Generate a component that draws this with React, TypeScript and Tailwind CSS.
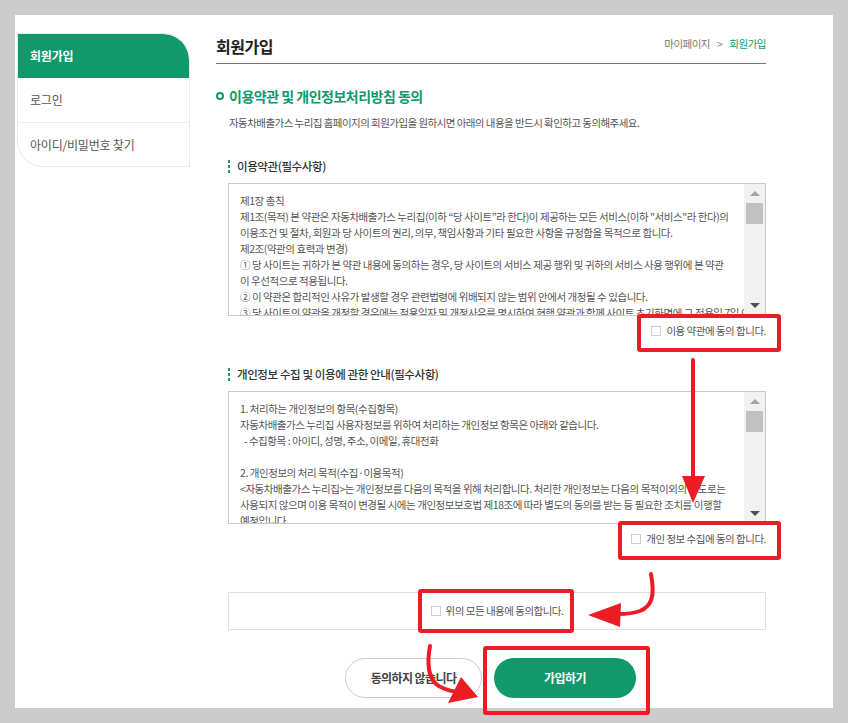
import React from "react";

const terms = [
  "제1장 총칙",
  "제1조(목적) 본 약관은 자동차배출가스 누리집(이하 “당 사이트”라 한다)이 제공하는 모든 서비스(이하 \"서비스\"라 한다)의",
  "이용조건 및 절차, 회원과 당 사이트의 권리, 의무, 책임사항과 기타 필요한 사항을 규정함을 목적으로 합니다.",
  "제2조(약관의 효력과 변경)",
  "① 당 사이트는 귀하가 본 약관 내용에 동의하는 경우, 당 사이트의 서비스 제공 행위 및 귀하의 서비스 사용 행위에 본 약관",
  "이 우선적으로 적용됩니다.",
  "② 이 약관은 합리적인 사유가 발생할 경우 관련법령에 위배되지 않는 범위 안에서 개정될 수 있습니다.",
  "③ 당 사이트의 약관을 개정할 경우에는 적용일자 및 개정사유를 명시하여 현행 약관과 함께 사이트 초기화면에 그 적용일 7일 이전부터",
];

const privacy = [
  "1. 처리하는 개인정보의 항목(수집항목)",
  "자동차배출가스 누리집 사용자정보를 위하여 처리하는 개인정보 항목은 아래와 같습니다.",
  "  - 수집항목 : 아이디, 성명, 주소, 이메일, 휴대전화",
  "",
  "2. 개인정보의 처리 목적(수집·이용목적)",
  "<자동차배출가스 누리집>는 개인정보를 다음의 목적을 위해 처리합니다. 처리한 개인정보는 다음의 목적이외의 용도로는",
  "사용되지 않으며 이용 목적이 변경될 시에는 개인정보보호법 제18조에 따라 별도의 동의를 받는 등 필요한 조치를 이행할",
  "예정입니다",
];

function Checkbox() {
  return <span className="inline-block w-[10px] h-[10px] border border-[#cfcfcf] bg-white" />;
}

function SubTitle({ children }: { children: React.ReactNode }) {
  return (
    <div className="mt-[27px] flex items-center gap-[7px] leading-[16px]">
      <div className="flex flex-col gap-[2px]">
        <span className="w-[2px] h-[3px] bg-[#11996c]" />
        <span className="w-[2px] h-[3px] bg-[#11996c]" />
        <span className="w-[2px] h-[3px] bg-[#11996c]" />
      </div>
      <span className="text-[11.5px] font-medium tracking-[-0.4px] text-[#333]">{children}</span>
    </div>
  );
}

function ScrollBox({ lines }: { lines: string[] }) {
  return (
    <div className="mt-[9px] h-[133px] border border-[#c8c8c8] flex">
      <div className="flex-1 overflow-hidden pl-[11px] pt-[9px] text-[10.5px] leading-[16px] tracking-[-0.45px] text-[#555]">
        {lines.map((l, i) => (
          <div key={i} className="whitespace-pre h-[16px]">
            {l}
          </div>
        ))}
      </div>
      <div className="w-[21px] bg-[#f1f1f1] flex flex-col items-center">
        <div className="h-[19px] flex items-center justify-center">
          <span className="w-0 h-0 border-l-[5px] border-r-[5px] border-b-[5px] border-l-transparent border-r-transparent border-b-[#a3a3a3]" />
        </div>
        <div className="w-[17px] h-[21px] bg-[#c1c1c1]" />
        <div className="flex-1" />
        <div className="h-[19px] flex items-center justify-center">
          <span className="w-0 h-0 border-l-[5px] border-r-[5px] border-t-[5px] border-l-transparent border-r-transparent border-t-[#505050]" />
        </div>
      </div>
    </div>
  );
}

function AgreeRow({ label }: { label: string }) {
  return (
    <div className="mt-[7px] flex justify-end items-center gap-[5px] leading-[16px] text-[10.5px] tracking-[-0.5px] text-[#555]">
      <Checkbox />
      <span>{label}</span>
    </div>
  );
}

function RedBox({ className }: { className: string }) {
  return <div className={`absolute border-[4px] border-[#ec1c24] rounded-[3px] ${className}`} />;
}

export default function App() {
  return (
    <div className="relative w-[848px] h-[723px] bg-[#cccccc] pt-[15px] pl-[15px] font-['Noto_Sans_CJK_KR','Noto_Sans',sans-serif] overflow-hidden">
      <div className="w-[818px] h-[693px] bg-white flex pl-[2px] pt-[18px]">
        {/* Sidebar */}
        <aside className="w-[173px] h-[134px] border border-[#e8e8e8] rounded-tr-[26px] rounded-bl-[26px] overflow-hidden text-[12px] tracking-[-0.2px]">
          <div className="h-[44px] bg-[#11996c] text-white font-bold flex items-center pl-[12px] rounded-tr-[26px]">회원가입</div>
          <div className="h-[45px] border-b border-[#ececec] text-[#555] flex items-center pl-[12px]">로그인</div>
          <div className="h-[44px] text-[#555] flex items-center pl-[12px]">아이디/비밀번호 찾기</div>
        </aside>

        {/* Main */}
        <main className="ml-[26px] w-[550px]">
          <div className="flex items-end justify-between border-b border-[#777] pb-[6px] leading-[22px]">
            <h1 className="text-[16px] font-bold tracking-[-0.45px] text-[#222]">회원가입</h1>
            <div className="text-[10.5px] tracking-[-0.5px] text-[#777] pb-[2px]">
              마이페이지<span className="mx-[7px]">&gt;</span>
              <span className="text-[#11996c]">회원가입</span>
            </div>
          </div>

          <div className="mt-[24px] flex items-center gap-[5px] leading-[16px]">
            <span className="w-[8px] h-[8px] rounded-full border-2 border-[#11996c]" />
            <h2 className="text-[14px] font-bold tracking-[-0.5px] text-[#11996c]">이용약관 및 개인정보처리방침 동의</h2>
          </div>
          <p className="mt-[11px] pl-[13px] text-[10.5px] leading-[16px] tracking-[-0.55px] text-[#555]">
            자동차배출가스 누리집 홈페이지의 회원가입을 원하시면 아래의 내용을 반드시 확인하고 동의해주세요.
          </p>

          <div className="pl-[12px]">
            <SubTitle>이용약관(필수사항)</SubTitle>
            <ScrollBox lines={terms} />
            <AgreeRow label="이용 약관에 동의 합니다." />

            <SubTitle>개인정보 수집 및 이용에 관한 안내(필수사항)</SubTitle>
            <ScrollBox lines={privacy} />
            <AgreeRow label="개인 정보 수집에 동의 합니다." />

            <div className="mt-[45px] h-[38px] border border-[#e0e0e0] flex justify-center items-center gap-[5px] text-[10.5px] tracking-[-0.5px] text-[#555]">
              <Checkbox />
              <span>위의 모든 내용에 동의합니다.</span>
            </div>

            <div className="mt-[28px] flex justify-center gap-[12px] pr-[13px]">
              <button className="w-[137px] h-[40px] rounded-full border border-[#cccccc] bg-white text-[12px] font-bold tracking-[-0.6px] text-[#444]">
                동의하지 않습니다
              </button>
              <button className="w-[142px] h-[40px] rounded-full bg-[#11996c] text-[12px] font-bold tracking-[-0.6px] text-white">
                가입하기
              </button>
            </div>
          </div>
        </main>
      </div>

      {/* Annotations */}
      <RedBox className="left-[637px] top-[314px] w-[144px] h-[38px]" />
      <RedBox className="left-[618px] top-[521px] w-[163px] h-[39px]" />
      <RedBox className="left-[418px] top-[589px] w-[156px] h-[44px]" />
      <RedBox className="left-[483px] top-[646px] w-[167px] h-[69px]" />
      <svg className="absolute left-0 top-0 pointer-events-none" width="848" height="723" viewBox="0 0 848 723">
        <g stroke="#ec1c24" strokeWidth="4" fill="none" strokeLinecap="round">
          <path d="M693 360 L693 480" />
          <path d="M651 574 C655 596 652 606 640 611 C632 614 626 614 618 614" />
          <path d="M430 646 C427 662 428 676 436 684 C442 689 450 691 458 692" />
        </g>
        <g fill="#ec1c24">
          <path d="M682 476 L705 476 L693 503 Z" />
          <path d="M588 615 L621 603 L620 627 Z" />
          <path d="M478 697 L448 703 L461 677 Z" />
        </g>
      </svg>
    </div>
  );
}
